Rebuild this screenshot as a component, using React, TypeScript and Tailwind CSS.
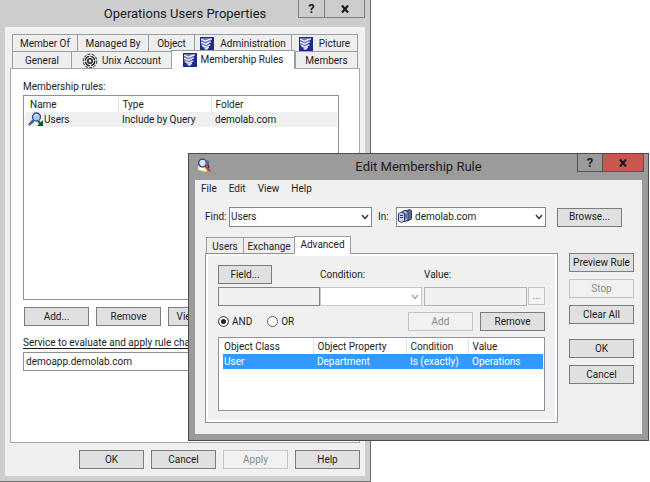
import { useState } from 'react';
import type { ReactNode } from 'react';
import clsx from 'clsx';

function WaveIcon() {
  return (
    <svg viewBox="0 0 14 14" className="size-[14px] shrink-0" aria-hidden="true">
      <rect width="14" height="14" fill="#20288c" />
      <path d="M1 1h11L11 4l-2 2 1 2-2 2v3H5L1 8z" fill="#6c78c0" />
      <g fill="none" stroke="#fff" strokeWidth="1.200">
        <path d="M1 2.500c3 0 3 2 5 1.500s3-2 6-2" />
        <path d="M1 5.500c3 0 3 2 5 1.500s3-2 5-2" />
        <path d="M2 8.500c2 0 2.500 2 4.500 1.500s2-2 4-2" />
        <path d="M5 12c2 0 2-1 4-1.500" />
      </g>
    </svg>
  );
}

function GearIcon() {
  return (
    <svg viewBox="0 0 16 16" className="size-4 shrink-0" fill="none" stroke="#222" aria-hidden="true">
      <circle cx="8" cy="8" r="6.800" strokeWidth="1" strokeDasharray="3 1.200" />
      <circle cx="8" cy="8" r="4.700" strokeWidth="1.400" strokeDasharray="6 1.400" />
      <circle cx="8" cy="8" r="2.200" strokeWidth="1.600" fill="#fff" />
    </svg>
  );
}

function QueryIcon() {
  return (
    <svg viewBox="0 0 16 15" className="h-[15px] w-4 shrink-0" aria-hidden="true">
      <path d="M0 13l4-6 2 4-3 1z" fill="#c98a9a" />
      <path d="M1 13l5-5" stroke="#2c5c9c" strokeWidth="2" />
      <circle cx="8.500" cy="5" r="4" fill="#a8c8ec" stroke="#34507c" strokeWidth="1.300" />
      <path d="M6.500 4l2-1.500" stroke="#fff" strokeWidth="1.200" />
      <path d="M15 8v6H9l2.200-2.200L9.500 10l1.600-1.500 1.700 1.700z" fill="#0a5a34" />
    </svg>
  );
}

function FindIcon() {
  return (
    <svg viewBox="0 0 15 14" className="h-[14px] w-[15px]" aria-hidden="true">
      <path d="M1 8l5-1 6 3-3 4-8-2z" fill="#f4e49c" />
      <path d="M2 10l6 2" stroke="#fff" strokeWidth="2" />
      <circle cx="5.500" cy="5" r="3.800" fill="#d8e6fa" stroke="#34407c" strokeWidth="1.300" />
      <path d="M9 2l3 1v4l-3 1z" fill="#5c689c" />
      <path d="M8 8l5 5" stroke="#b43c2c" strokeWidth="2.200" />
      <path d="M11 7l1 3" stroke="#5c2c2c" strokeWidth="1.500" />
    </svg>
  );
}

function DomainIcon() {
  return (
    <svg viewBox="0 0 14 14" className="size-[14px]" stroke="#2c3460" strokeWidth="1" aria-hidden="true">
      <path d="M7.500 2l4-1.500 2 1V10l-4 2-2-1z" fill="#5c68a0" />
      <path d="M4 2.500l3-1 3 1V11l-3 1.500L4 11z" fill="#a8b4d8" />
      <path d="M.5 4.500l3-1 3 1V12l-3 1.500-3-1.500z" fill="#ccd4ea" />
      <path d="M2 6.500h3M2 8.500h3M8 4.500v5" fill="none" />
    </svg>
  );
}

function CloseGlyph() {
  return (
    <svg viewBox="0 0 8 8" className="size-2" aria-hidden="true">
      <path d="M1 .5l6 7M7 .5l-6 7" stroke="#1c1c1c" strokeWidth="2.200" />
    </svg>
  );
}

type PushButtonProps = {
  children: ReactNode;
  disabled?: boolean;
  focused?: boolean;
  className?: string;
};

function PushButton({ children, disabled, focused, className = 'w-[65px]' }: PushButtonProps) {
  return (
    <button
      type="button"
      disabled={disabled}
      className={clsx(
        'h-[19px] shrink-0 whitespace-nowrap border text-center leading-4',
        disabled && 'border-[#bfc4c9] bg-[#f1f1f0] text-[#8a8a8a]',
        !disabled && 'bg-[#e0e0e0]',
        !disabled && (focused ? 'border-[#4a8cc4]' : 'border-[#7c7c7c]'),
        className,
      )}
    >
      {children}
    </button>
  );
}

type ComboProps = {
  label: string;
  id: string;
  value?: string;
  icon?: ReactNode;
  disabled?: boolean;
  className?: string;
};

function Combo({ label, id, value = '', icon, disabled, className }: ComboProps) {
  return (
    <div className={clsx('relative', className)}>
      <select
        id={id}
        aria-label={label}
        disabled={disabled}
        className={clsx(
          'block w-full appearance-none border bg-white',
          disabled ? 'h-[19px] border-[#c4c8cc]' : 'h-5 border-[#7f8790]',
          icon ? 'pl-[18px]' : 'pl-px',
        )}
      >
        <option>{value}</option>
      </select>
      {icon && <span className="pointer-events-none absolute left-0.5 top-0.5">{icon}</span>}
      <svg
        viewBox="0 0 8 6"
        className="pointer-events-none absolute right-[3px] top-[7px] h-1.5 w-2"
        fill="none"
        stroke={disabled ? '#b0b0b0' : '#444'}
        strokeWidth="1.600"
        aria-hidden="true"
      >
        <path d="M1 1l3 3.500L7 1" />
      </svg>
    </div>
  );
}

type TabProps = {
  label: string;
  icon?: ReactNode;
  className: string;
  selected?: boolean;
};

function Tab({ label, icon, className, selected }: TabProps) {
  return (
    <button
      type="button"
      role="tab"
      aria-selected={!!selected}
      className={clsx(
        'flex items-center justify-center whitespace-nowrap border-l border-t border-[#9a9fa6] leading-4',
        selected ? 'relative z-10 -mt-px -mb-px border-r bg-white pb-px' : 'bg-[#eeeeee] pt-0.5',
        className,
      )}
    >
      {icon}
      {label}
    </button>
  );
}

const backTabs = [
  { label: 'Member Of', className: 'w-[65px]' },
  { label: 'Managed By', className: 'w-[71px]' },
  { label: 'Object', className: 'w-[46px]' },
  { label: 'Administration', className: 'w-[97px] gap-1.5', icon: <WaveIcon /> },
  { label: 'Picture', className: 'flex-1 gap-1.5 border-r', icon: <WaveIcon /> },
];

const frontTabs = [
  { label: 'General', className: 'w-[59px]' },
  { label: 'Unix Account', className: 'w-[100px] gap-1', icon: <GearIcon /> },
  { label: 'Membership Rules', className: 'w-[124px] gap-1', icon: <WaveIcon />, selected: true },
  { label: 'Members', className: 'flex-1 border-r' },
];

function PropertiesWindow() {
  return (
    <section className="w-[57%] min-w-[371px] border-r border-b border-[#6e6e6e] bg-[#cdcdcd] px-[5px] pb-[5px]">
      <header className="relative flex h-[27px] items-center justify-center">
        <h1 className="text-[13px] leading-5">Operations Users Properties</h1>
        <div className="absolute right-0 top-0 flex h-[18px] border border-t-0 border-[#808080]">
          <button type="button" aria-label="Help" className="w-[25px] text-[13px] leading-4 font-bold">?</button>
          <button type="button" aria-label="Close" className="grid w-10 place-items-center border-l border-[#808080]">
            <CloseGlyph />
          </button>
        </div>
      </header>

      <div className="bg-[#f0f0f0] px-[5px] pt-[7px] pb-[7px]">
        <div role="tablist" className="px-0.5">
          <div className="flex h-[17px]">
            {backTabs.map((tab) => <Tab key={tab.label} {...tab} />)}
          </div>
          <div className="flex h-[17px]">
            {frontTabs.map((tab) => <Tab key={tab.label} {...tab} />)}
          </div>
        </div>

        <div className="h-[375px] border border-[#a4a8ae] bg-white px-3 pt-[10px]">
          <p className="leading-4">Membership rules:</p>
          <div className="mr-2 h-[205px] border border-[#8c9096] p-px">
            <table className="w-full table-fixed text-left">
              <thead>
                <tr className="h-[15px] leading-[15px]">
                  <th className="w-[93px] border-r border-[#e0e0e0] pl-[5px] font-normal">Name</th>
                  <th className="w-[93px] border-r border-[#e0e0e0] pl-1 font-normal">Type</th>
                  <th className="pl-1 font-normal">Folder</th>
                </tr>
              </thead>
              <tbody>
                <tr className="h-[15px] bg-[#f0f0f0] leading-[15px]">
                  <td className="pl-[3px]"><span className="flex"><QueryIcon />Users</span></td>
                  <td className="pl-1 whitespace-nowrap">Include by Query</td>
                  <td className="pl-1">demolab.com</td>
                </tr>
              </tbody>
            </table>
          </div>

          <div className="mt-[7px] flex gap-[7px] pl-px">
            <PushButton>Add...</PushButton>
            <PushButton>Remove</PushButton>
            <PushButton className="w-[46px]">View...</PushButton>
          </div>

          <label htmlFor="service" className="mt-[9px] block leading-4 underline underline-offset-2">
            Service to evaluate and apply rule changes
          </label>
          <input
            id="service"
            defaultValue="demoapp.demolab.com"
            className="mt-px block h-[19px] w-[306px] border border-[#8c9096] px-0.5"
          />
        </div>

        <footer className="mt-[7px] flex justify-end gap-[7px]">
          <PushButton>OK</PushButton>
          <PushButton>Cancel</PushButton>
          <PushButton disabled>Apply</PushButton>
          <PushButton>Help</PushButton>
        </footer>
      </div>
    </section>
  );
}

function RuleEditor() {
  const [operator, setOperator] = useState('AND');

  return (
    <div className="flex-1 border border-[#8e939b] bg-white p-0.5">
      <div className="h-full bg-[#f0f0f0] px-2.5 pt-[9px] pb-[9px]">
        <div className="grid grid-cols-[102px_104px_1fr] items-center">
          <PushButton className="w-[54px]">Field...</PushButton>
          <label htmlFor="condition">Condition:</label>
          <label htmlFor="value">Value:</label>
        </div>
        <div className="mt-[3px] flex">
          <input aria-label="Field" readOnly className="h-[19px] w-[102px] border border-[#858585] bg-[#f0f0f0]" />
          <Combo id="condition" label="Condition" disabled className="w-[102px]" />
          <input
            id="value"
            disabled
            className="ml-0.5 h-[19px] w-0 min-w-0 flex-1 border border-[#b4b4b4] bg-[#f0f0f0]"
          />
          <button type="button" disabled className="ml-px h-[18px] w-[17px] border border-[#bfc4c9] bg-[#f4f4f4] leading-3 text-[#777]">
            ...
          </button>
        </div>

        <div className="mt-1.5 flex items-center gap-[7px]">
          {['AND', 'OR'].map((name) => (
            <label key={name} className="mr-2 flex items-center gap-[3px]">
              <input
                type="radio"
                name="operator"
                checked={operator === name}
                onChange={() => setOperator(name)}
                className="size-[11px] appearance-none rounded-full border border-[#606060] bg-white checked:bg-[#222] checked:shadow-[inset_0_0_0_2px_#fff]"
              />
              {name}
            </label>
          ))}
          <PushButton disabled className="ml-auto w-[65px]">Add</PushButton>
          <PushButton>Remove</PushButton>
        </div>

        <div className="mt-1.5 h-[74px] border border-[#8e939b] bg-white p-px">
          <table className="w-full table-fixed text-left">
            <thead>
              <tr className="h-[15px] leading-[15px] whitespace-nowrap">
                <th className="w-[93px] border-r border-[#e0e0e0] pl-1 font-normal">Object Class</th>
                <th className="w-[93px] border-r border-[#e0e0e0] pl-1 font-normal">Object Property</th>
                <th className="w-[62px] border-r border-[#e0e0e0] pl-1 font-normal">Condition</th>
                <th className="pl-1 font-normal">Value</th>
              </tr>
            </thead>
            <tbody>
              <tr className="h-[15px] leading-[15px] whitespace-nowrap text-white">
                <td className="pl-[3px]"><span className="block bg-[#3399ff] pl-px">User</span></td>
                <td className="bg-[#3399ff] pl-1">Department</td>
                <td className="bg-[#3399ff] pl-1">Is (exactly)</td>
                <td className="bg-[#3399ff] pl-1">Operations</td>
              </tr>
            </tbody>
          </table>
        </div>
      </div>
    </div>
  );
}

function EditRuleWindow() {
  return (
    <section className="absolute top-[153px] right-px left-[188px] min-w-[461px] border border-[#4c4c4c] bg-[#9b9b9b] px-1.5 pb-1.5">
      <header className="relative flex h-[26px] items-center justify-center">
        <span className="absolute top-1 left-0.5"><FindIcon /></span>
        <h2 className="text-[13px] leading-5">Edit Membership Rule</h2>
        <div className="absolute top-0 right-[-2px] flex h-[18px] border border-t-0 border-[#555]">
          <button type="button" aria-label="Help" className="w-6 text-[13px] leading-4 font-bold">?</button>
          <button type="button" aria-label="Close" className="grid w-[41px] place-items-center border-l border-[#555] bg-[#c8574c]">
            <CloseGlyph />
          </button>
        </div>
      </header>

      <div className="bg-[#f0f0f0] pb-[11px]">
        <nav className="flex gap-3 px-1.5 pt-px leading-4">
          {['File', 'Edit', 'View', 'Help'].map((item) => (
            <button key={item} type="button">{item}</button>
          ))}
        </nav>

        <div className="mt-2.5 flex items-center pr-5 pl-2.5">
          <label htmlFor="find" className="w-6">Find:</label>
          <Combo id="find" label="Find" value="Users" className="w-[143px]" />
          <label htmlFor="scope" className="w-6 pl-1.5">In:</label>
          <Combo id="scope" label="In" value="demolab.com" icon={<DomainIcon />} className="flex-1" />
          <PushButton className="ml-[11px] w-[65px]">Browse...</PushButton>
        </div>

        <div className="flex items-start pr-2 pl-2.5">
          <div className="flex min-w-0 flex-1 flex-col">
            <div role="tablist" className="mt-2.5 flex h-4 pl-px">
              <Tab label="Users" className="w-[37px]" />
              <Tab label="Exchange" className="w-[51px]" />
              <Tab label="Advanced" className="w-[57px]" selected />
            </div>
            <RuleEditor />
          </div>
          <div className="mt-[26px] ml-[11px] flex flex-col gap-[7px]">
            <PushButton focused>Preview Rule</PushButton>
            <PushButton disabled>Stop</PushButton>
            <PushButton>Clear All</PushButton>
            <span className="h-px" />
            <PushButton>OK</PushButton>
            <PushButton>Cancel</PushButton>
          </div>
        </div>
      </div>
    </section>
  );
}

export default function App() {
  return (
    <main className="relative min-h-screen bg-white font-[Roboto,Noto_Sans,sans-serif] text-[10px] leading-4 text-[#1c1c1c]">
      <PropertiesWindow />
      <EditRuleWindow />
    </main>
  );
}
